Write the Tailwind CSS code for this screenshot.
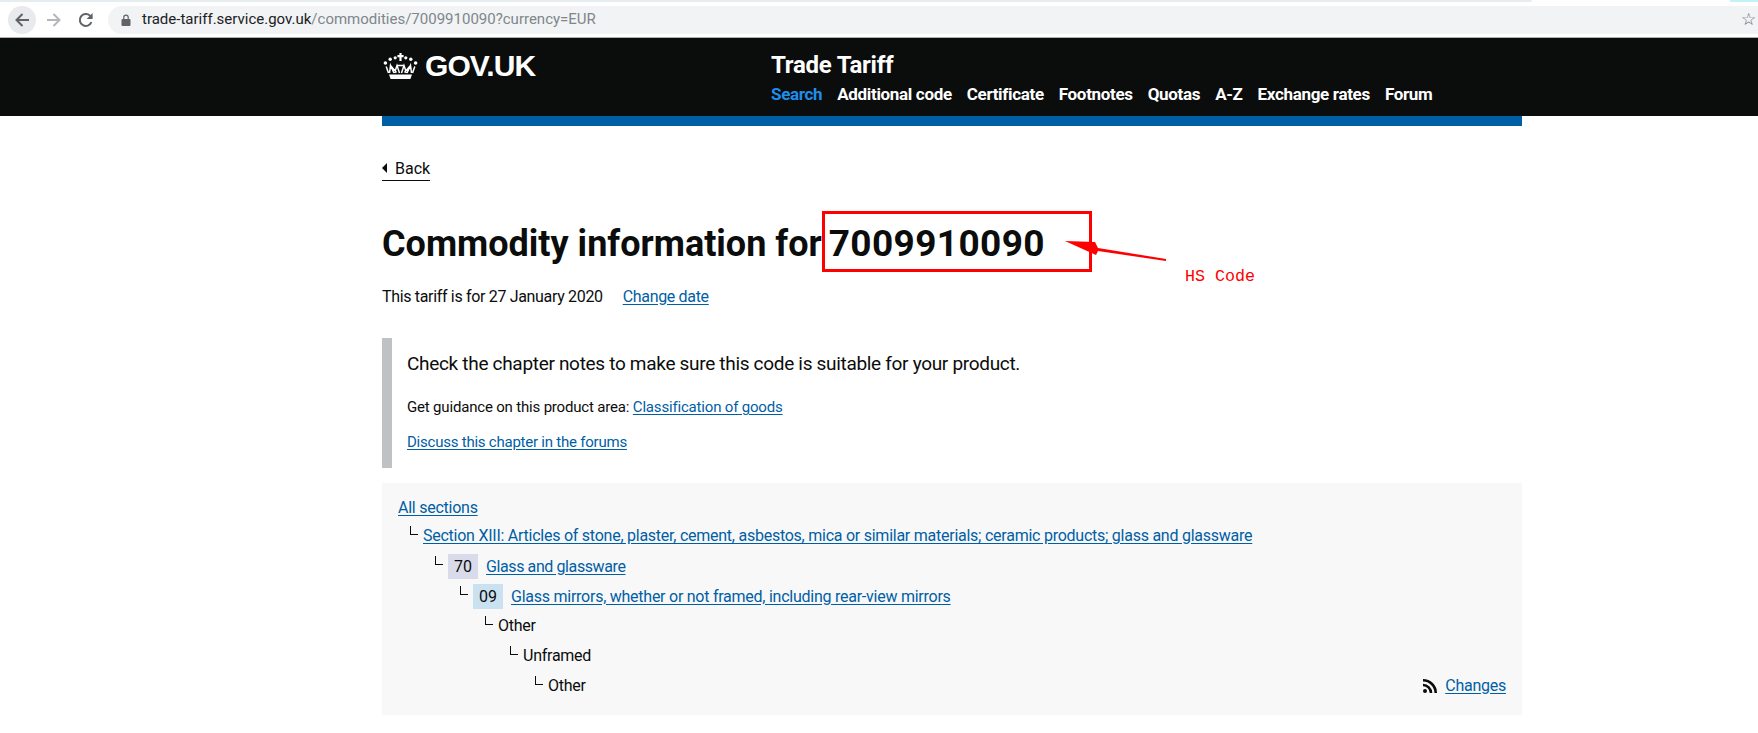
<!DOCTYPE html>
<html lang="en">
<head>
<meta charset="utf-8">
<title>Trade Tariff</title>
<script src="https://cdn.jsdelivr.net/npm/@tailwindcss/browser@4"></script>
</head>
<body class="relative h-[733px] w-[1758px] overflow-hidden bg-white font-['Roboto',sans-serif] text-[#0b0c0c]">
  <!-- browser chrome -->
  <div class="flex h-[38px] flex-col border-b border-[#b0b0b0] bg-white">
    <div class="flex h-[2px]">
      <div class="w-[1532px] rounded-br-[2px] bg-[#e6edf0]"></div>
      <div class="ml-[198px] flex-1 bg-[#c4f1f7]"></div>
    </div>
    <div class="flex h-[35px] items-center pl-[8px]">
      <div class="flex h-[28px] w-[28px] items-center justify-center rounded-full bg-[#e9eaed]">
        <svg width="16" height="16" viewBox="0 0 16 16" fill="none" stroke="#5f6368" stroke-width="2"><path d="M15 8H2.5M8.5 2 2.5 8l6 6"/></svg>
      </div>
      <svg class="ml-[10px]" width="16" height="16" viewBox="0 0 16 16" fill="none" stroke="#b4b6b9" stroke-width="2"><path d="M1 8h12.5M7.5 2l6 6-6 6"/></svg>
      <svg class="ml-[16px]" width="16" height="16" viewBox="0 0 16 16" fill="none" stroke="#5f6368" stroke-width="2"><path d="M13.4 10.2A6 6 0 1 1 12 3.6L13.6 5.4"/><path d="M14.6 1v6h-6Z" fill="#5f6368" stroke="none"/></svg>
      <div class="ml-[14px] flex h-[28px] flex-1 items-center rounded-l-full bg-[#f1f3f4] pl-[13px] pr-[2px]">
        <svg width="10" height="12" viewBox="0 0 10 12" fill="#5f6368"><path d="M1.5 5h7a1 1 0 0 1 1 1v5a1 1 0 0 1-1 1h-7a1 1 0 0 1-1-1V6a1 1 0 0 1 1-1Z"/><path d="M2.8 5V3.3a2.2 2.2 0 0 1 4.4 0V5" fill="none" stroke="#5f6368" stroke-width="1.2"/></svg>
        <span class="ml-[11px] text-[15px] text-[#80868b]"><span class="text-[#202124]">trade-tariff.service.gov.uk</span>/commodities/7009910090?currency=EUR</span>
        <span class="ml-auto text-[17px] leading-none text-[#5f6368]">☆</span>
      </div>
    </div>
  </div>

  <!-- GOV.UK header -->
  <header class="h-[78px] bg-[#0b0c0c]">
    <div class="ml-[382px] flex items-start">
      <a class="flex w-[389px] items-center pt-[11px] pl-[1px] text-white" href="#">
        <svg width="35" height="26" viewBox="0 0 35 26" fill="#fff">
          <path d="M6 21.5h23l-1.6 4.5H7.6Z"/>
          <path d="M16.4 0h2.2v2h2v2.2h-2V8h-2.2V4.2h-2V2h2Z"/>
          <circle cx="2.4" cy="10" r="1.8"/><circle cx="7.2" cy="6.2" r="1.7"/><circle cx="12.2" cy="4.8" r="1.6"/><circle cx="22.8" cy="4.8" r="1.6"/><circle cx="27.8" cy="6.2" r="1.7"/><circle cx="32.6" cy="10" r="1.8"/>
          <path d="M5.5 20 3.2 13.5M6.5 20l1-7.5 3.5 7.5M11.5 20l2.5-7.5 2.5 7.5M18.5 20l2.5-7.5 2.5 7.5M24 20l3.5-7.5 1 7.5M29.5 20l2.3-6.5M14.2 12.5h6.6M7.5 12.5l6 7M27.5 12.5l-6 7" fill="none" stroke="#fff" stroke-width="1.5"/>
        </svg>
        <span class="ml-[7px] font-['Liberation_Sans',sans-serif] text-[30px] leading-[34px] font-bold tracking-[-0.9px]">GOV.UK</span>
      </a>
      <div class="pt-[13px]">
        <div class="text-[24px] leading-[28px] font-bold tracking-[-0.25px] text-white">Trade Tariff</div>
        <nav class="mt-[5px] flex gap-x-[15px] text-[17px] leading-[20px] font-bold tracking-[-0.33px] whitespace-nowrap text-white">
          <a class="text-[#1d8feb]" href="#">Search</a>
          <a href="#">Additional code</a>
          <a href="#">Certificate</a>
          <a href="#">Footnotes</a>
          <a href="#">Quotas</a>
          <a href="#">A-Z</a>
          <a href="#">Exchange rates</a>
          <a href="#">Forum</a>
        </nav>
      </div>
    </div>
  </header>

  <main class="ml-[382px] w-[1140px]">
    <div class="h-[10px] bg-[#005ea5]"></div>

    <a class="mt-[32px] inline-flex h-[23px] items-start gap-[8px] border-b border-[#0b0c0c] text-[16px] leading-[22px]" href="#">
      <span class="mt-[5px] h-0 w-0 border-y-[5px] border-r-[5px] border-y-transparent border-r-[#0b0c0c]"></span>
      Back
    </a>

    <h1 class="mt-[41px] text-[36px] leading-[44px] font-bold">Commodity information for<span class="ml-[7px] text-[37px] tracking-[0.4px]">7009910090</span></h1>

    <p class="mt-[20px] text-[16px] leading-[22px] tracking-[-0.33px]">This tariff is for 27 January 2020<a class="ml-[20px] text-[#005ea5] underline underline-offset-2" href="#">Change date</a></p>

    <section class="mt-[30px] h-[130px] border-l-[10px] border-[#bfc1c3] pl-[15px] pt-[13px]">
      <p class="text-[19px] leading-[26px] tracking-[-0.31px]">Check the chapter notes to make sure this code is suitable for your product.</p>
      <p class="mt-[20px] text-[15px] leading-[20px] tracking-[-0.18px]">Get guidance on this product area: <a class="text-[#005ea5] underline underline-offset-2" href="#">Classification of goods</a></p>
      <p class="mt-[15px] text-[15px] leading-[20px] tracking-[-0.23px]"><a class="text-[#005ea5] underline underline-offset-2" href="#">Discuss this chapter in the forums</a></p>
    </section>

    <section class="relative mt-[15px] h-[232px] bg-[#f8f8f8] px-[16px] pt-[15px] text-[16px] leading-[20px] tracking-[-0.25px]">
      <a class="text-[#005ea5] underline underline-offset-2" href="#">All sections</a>
      <div class="mt-[8px] ml-[12px] flex h-[20px] items-start">
        <span class="mr-[5px] h-[9px] w-[8px] border-b border-l border-[#0b0c0c]"></span>
        <a class="text-[#005ea5] underline underline-offset-2" href="#">Section XIII: Articles of stone, plaster, cement, asbestos, mica or similar materials; ceramic products; glass and glassware</a>
      </div>
      <div class="mt-[8px] ml-[37px] flex h-[25px] items-start">
        <span class="mt-[2px] mr-[5px] h-[9px] w-[8px] border-b border-l border-[#0b0c0c]"></span>
        <span class="flex h-[25px] w-[30px] items-center justify-center bg-[#dadbea] tracking-normal">70</span>
        <a class="ml-[8px] self-center tracking-[-0.4px] text-[#005ea5] underline underline-offset-2" href="#">Glass and glassware</a>
      </div>
      <div class="mt-[5px] ml-[62px] flex h-[25px] items-start">
        <span class="mt-[2px] mr-[5px] h-[9px] w-[8px] border-b border-l border-[#0b0c0c]"></span>
        <span class="flex h-[25px] w-[30px] items-center justify-center bg-[#c9e1f0] tracking-normal">09</span>
        <a class="ml-[8px] self-center text-[#005ea5] underline underline-offset-2" href="#">Glass mirrors, whether or not framed, including rear-view mirrors</a>
      </div>
      <div class="mt-[7px] ml-[87px] flex h-[20px] items-start">
        <span class="mr-[5px] h-[9px] w-[8px] border-b border-l border-[#0b0c0c]"></span>Other
      </div>
      <div class="mt-[10px] ml-[112px] flex h-[20px] items-start">
        <span class="mr-[5px] h-[9px] w-[8px] border-b border-l border-[#0b0c0c]"></span>Unframed
      </div>
      <div class="mt-[10px] ml-[137px] flex h-[20px] items-start">
        <span class="mr-[5px] h-[9px] w-[8px] border-b border-l border-[#0b0c0c]"></span>Other
      </div>
      <div class="absolute right-[16px] bottom-[19px] flex items-center gap-[8px]">
        <svg width="14" height="14" viewBox="0 0 14 14" fill="#0b0c0c"><circle cx="2" cy="12" r="2"/><path d="M0 4.7v2.6A6.7 6.7 0 0 1 6.7 14h2.6A9.3 9.3 0 0 0 0 4.7Z"/><path d="M0 0v2.6A11.4 11.4 0 0 1 11.4 14H14A14 14 0 0 0 0 0Z"/></svg>
        <a class="text-[#005ea5] underline underline-offset-2" href="#">Changes</a>
      </div>
    </section>
  </main>

  <!-- annotation drawn over the page -->
  <div class="absolute left-[822px] top-[211px] h-[61px] w-[270px] border-[3px] border-[#ff0000]"></div>
  <svg class="absolute left-[1060px] top-[234px]" width="110" height="30" viewBox="0 0 110 30" fill="#ff0000">
    <path d="M5 7 35 8l3 6 68 11v2L38 17l-2 4Z"/>
  </svg>
  <div class="absolute left-[1185px] top-[267px] font-['Liberation_Mono',monospace] text-[16.7px] leading-[20px] text-[#ff0000]">HS Code</div>
</body>
</html>
